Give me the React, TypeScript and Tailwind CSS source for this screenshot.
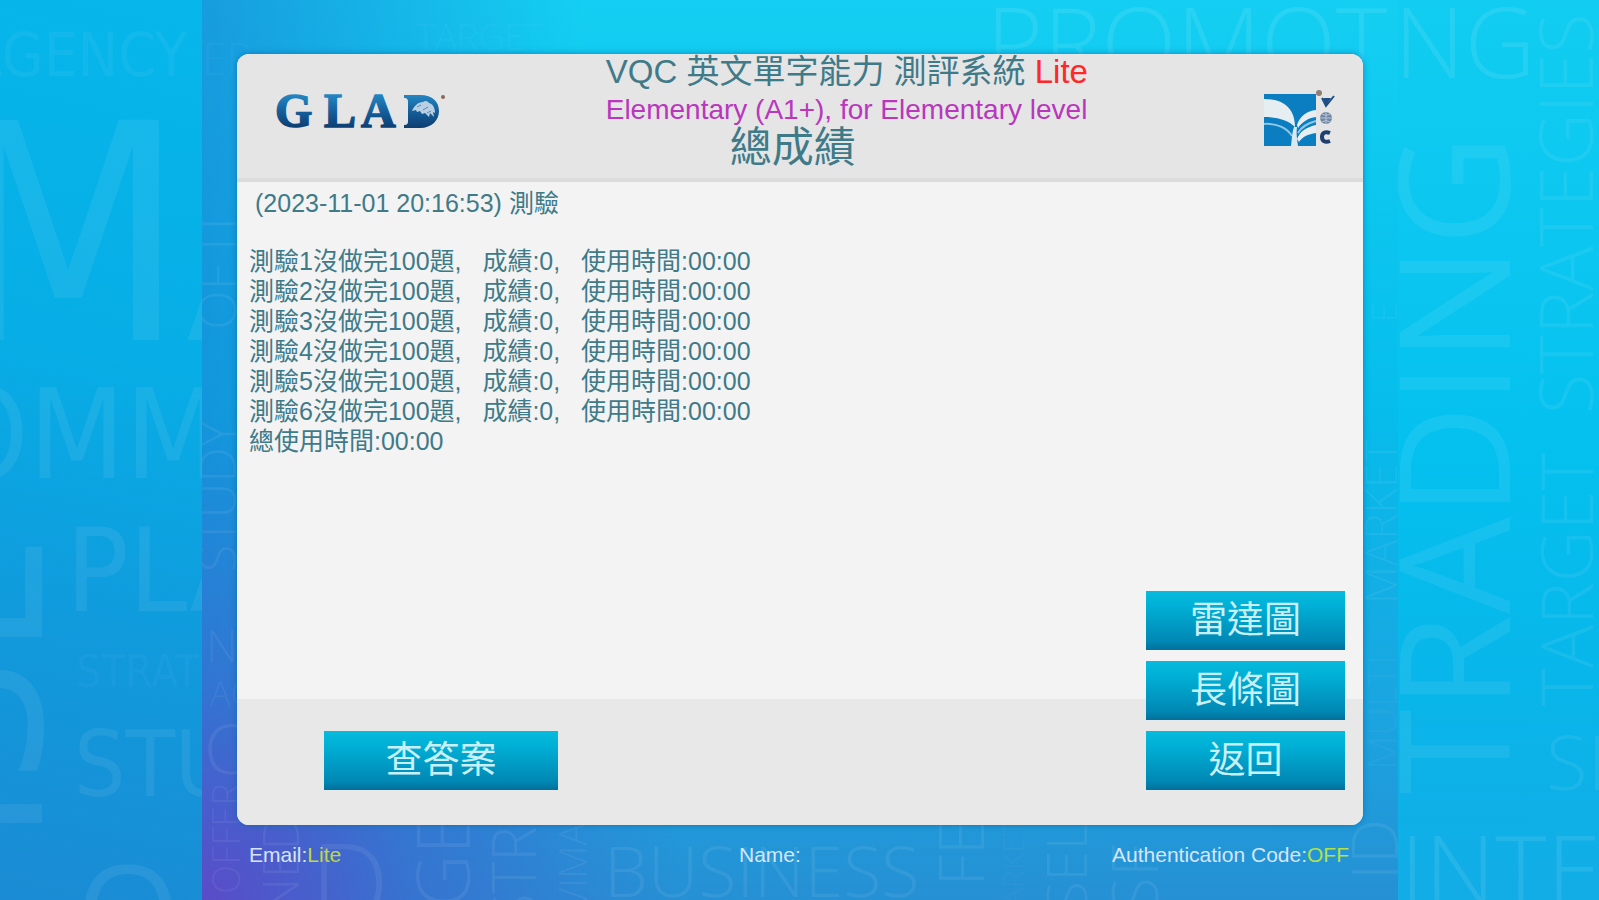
type Word = {
    text: string;
    x: number;
    y: number;
    size: number;
    vertical?: boolean;
    narrow?: boolean;
    bold?: boolean;
    opacity?: number;
};

const LEFT_WORDS: Word[] = [
    { text: 'AGENCY', x: -34, y: 76, size: 60, narrow: true, opacity: 0.05 },
    { text: 'MA', x: -49, y: 340, size: 302, narrow: true },
    { text: 'OMM', x: -59, y: 478, size: 124, narrow: true },
    { text: 'ISL', x: 42, y: 845, size: 225, vertical: true, bold: true },
    { text: 'PLAN', x: 66, y: 611, size: 116, narrow: true },
    { text: 'STRAT', x: 76, y: 687, size: 44, narrow: true, opacity: 0.05 },
    { text: 'STUDY', x: 74, y: 796, size: 90, narrow: true },
    { text: 'O', x: 76, y: 962, size: 134, bold: true },
];

const CENTER_WORDS: Word[] = [
    { text: 'PROMOT', x: 784, y: 78, size: 98, opacity: 0.09 },
    { text: 'ER', x: 0, y: 75, size: 44, opacity: 0.05 },
    { text: 'TARGET', x: 214, y: 50, size: 36, opacity: 0.05 },
    { text: 'STUDY', x: 34, y: 572, size: 50, vertical: true },
    { text: 'OF IT', x: 34, y: 330, size: 52, vertical: true },
    { text: 'NG', x: 4, y: 662, size: 44 },
    { text: 'AC', x: 8, y: 706, size: 34 },
    { text: 'C', x: 2, y: 774, size: 68 },
    { text: 'OFFER', x: 38, y: 894, size: 38, vertical: true },
    { text: 'NED', x: 97, y: 914, size: 50, vertical: true },
    { text: 'D', x: 108, y: 924, size: 112 },
    { text: 'GE', x: 268, y: 908, size: 74, vertical: true },
    { text: 'STR', x: 334, y: 926, size: 60, vertical: true },
    { text: 'VIMA', x: 385, y: 910, size: 38, vertical: true },
    { text: 'BUSINESS', x: 402, y: 897, size: 70 },
    { text: 'FE', x: 782, y: 886, size: 62, vertical: true },
    { text: 'MARKET', x: 822, y: 932, size: 30, vertical: true, opacity: 0.04 },
    { text: 'SEL', x: 885, y: 912, size: 56, vertical: true },
    { text: 'SF', x: 956, y: 912, size: 64, vertical: true },
    { text: 'MARKET', x: 1195, y: 604, size: 44, vertical: true },
    { text: 'MULTI', x: 1195, y: 770, size: 40, vertical: true, opacity: 0.05 },
    { text: 'E', x: 1195, y: 322, size: 34, vertical: true },
    { text: 'ID', x: 1196, y: 880, size: 64, vertical: true },
];

const RIGHT_WORDS: Word[] = [
    { text: 'NG', x: -4, y: 78, size: 98, opacity: 0.09 },
    { text: 'TRADING', x: 112, y: 794, size: 154, vertical: true, bold: true },
    { text: 'STRATEGIES', x: 195, y: 414, size: 74, vertical: true },
    { text: 'TARGET', x: 195, y: 706, size: 72, vertical: true },
    { text: 'SE', x: 148, y: 790, size: 76 },
    { text: 'INTER', x: 2, y: 906, size: 98, opacity: 0.09 },
];

const RESULTS = [1, 2, 3, 4, 5, 6].map((id) => ({ id, total: 100, score: 0, time: '00:00' }));

const BUTTON =
    'h-[59px] cursor-pointer bg-[linear-gradient(#08bade,#00b0d6_25%,#0088b4_85%,#00709c)] text-[37px] text-[#c8f0f8]';

const wordStyle = (word: Word) => {
    if (word.narrow) return "fill-white font-['DejaVu_Sans_Condensed','Open_Sans',sans-serif]";
    if (word.bold) return "fill-white font-['Open_Sans',sans-serif]";
    return "fill-white font-['Open_Sans',sans-serif] font-light";
};

const WordCloud = ({ words, width }: { words: Word[]; width: number }) => (
    <svg
        aria-hidden="true"
        viewBox={`0 0 ${width} 900`}
        preserveAspectRatio="xMidYMid slice"
        className="pointer-events-none absolute inset-0 h-full w-full select-none"
    >
        {words.map((word, i) => (
            <text
                key={i}
                transform={`translate(${word.x} ${word.y})${word.vertical ? ' rotate(-90)' : ''}`}
                fontSize={word.size}
                fillOpacity={word.opacity ?? 0.07}
                className={wordStyle(word)}
            >
                {word.text}
            </text>
        ))}
    </svg>
);

const GladLogo = () => (
    <svg role="img" aria-label="GLAD" viewBox="0 0 172 40" className="h-10 w-[172px]">
        <defs>
            <linearGradient id="glad" x1="0" y1="4" x2="0" y2="38" gradientUnits="userSpaceOnUse">
                <stop offset="0" stopColor="#2389c4" />
                <stop offset="0.5" stopColor="#155f9c" />
                <stop offset="1" stopColor="#0d3d70" />
            </linearGradient>
        </defs>
        <g
            fill="url(#glad)"
            stroke="url(#glad)"
            strokeWidth="1.5"
            fontSize="48"
            className="font-['Liberation_Serif',serif] font-bold"
        >
            <text x="0" y="37">G</text>
            <text x="49" y="37">L</text>
            <text x="86" y="37">A</text>
        </g>
        <path
            d="M129 5h16c13 0 19 7 19 16s-7 17-19 17h-16v-3c3 0 4-1 4-4V12c0-3-1-4-4-4z"
            fill="url(#glad)"
        />
        <path
            d="M137 21c2-5 6-9 11-9 2-2 5-1 6 1 4 1 6 5 6 10l-2-1 1 5-4-4-1 4-4-4-3 1-2-3-3 1-1-2z"
            fill="#b9cfe4"
        />
        <path d="M142 17l4-2m2 5l5-3m-1 6l4-2" stroke="#5b8ab8" />
        <circle cx="168" cy="7" r="2" fill="#8a6a58" />
    </svg>
);

const VqcLogo = () => (
    <svg role="img" aria-label="VQC" viewBox="0 0 72 56" className="h-14 w-[72px]">
        <rect y="4" width="52" height="52" fill="#0b7ec2" />
        <path d="M0 9c20 0 31 10 31 28C24 30 13 27 0 27z" fill="#e6eef2" />
        <path d="M33 35c3-9 10-14 19-15v7c-8 1-14 5-18 11z" fill="#e6eef2" />
        <path d="M33 49c3-8 10-12 19-14v8c-8 1-14 4-17 9z" fill="#e6eef2" />
        <path d="M0 34c13-1 23 4 28 12M34 43c4-7 10-10 18-12" fill="none" stroke="#8fc8e6" strokeWidth="2" />
        <path d="M27 56c1-8 1-14 3-19h3c-1 6 0 12 1 19z" fill="#d8e8f0" />
        <circle cx="55" cy="3" r="3" fill="#8d8074" />
        <path d="M59 8h8l-5 8z" fill="#1d4f86" />
        <path d="M58 8l4 8 8-10" fill="none" stroke="#1d4f86" strokeWidth="2" />
        <circle cx="62" cy="28" r="6" fill="#6f87a6" />
        <path d="M56 28h12M62 22v12M58 24q4 3 8 0M58 32q4-3 8 0" fill="none" stroke="#b9c6d6" />
        <path d="M66 43c-5-2-8 0-8 4s3 6 8 4" fill="none" stroke="#1f3f6e" strokeWidth="4" />
    </svg>
);

const App = () => {
    return (
        <div className="grid min-h-screen grid-cols-[202fr_1196fr_201fr] overflow-hidden font-['Liberation_Sans','Noto_Sans_CJK_TC',sans-serif]">
            <aside className="relative overflow-hidden bg-[linear-gradient(192deg,#06b7eb,#07ade6_40%,#109bdd_68%,#1a8bd4)]">
                <WordCloud words={LEFT_WORDS} width={202} />
            </aside>

            <main className="relative flex flex-col overflow-hidden bg-[radial-gradient(circle_at_0%_100%,#5a4cc8,#4a5ccc80_14%,#5a4cc800_32%),linear-gradient(to_right,#1a7ed2a0,#1a7ed200_32%),linear-gradient(to_top,#2690d4,#1ba4e0_20%,#06bdec_55%,#14cff2)] px-[35px] pt-[54px]">
                <WordCloud words={CENTER_WORDS} width={1196} />

                <div className="relative flex flex-1 flex-col overflow-hidden rounded-xl bg-[#f3f3f3] text-[#3f7a88] shadow-[0_0_6px_#0068a8b0]">
                    <header className="flex h-[128px] items-start border-b-4 border-[#dcdcdc] bg-[#e5e5e5] pr-[27px] pl-[38px]">
                        <div className="flex-4 pt-9">
                            <GladLogo />
                        </div>
                        <div className="whitespace-nowrap">
                            <h1 className="text-[33px] leading-9">
                                VQC 英文單字能力 測評系統 <span className="text-[#ff2828]">Lite</span>
                            </h1>
                            <p className="text-[28px] leading-10 text-[#b936bd]">
                                Elementary (A1+), for Elementary level
                            </p>
                            <h2 className="pl-[124px] text-[42px] leading-9">總成績</h2>
                        </div>
                        <div className="flex flex-3 justify-end pt-9">
                            <VqcLogo />
                        </div>
                    </header>

                    <section className="flex flex-1 flex-col justify-between bg-[linear-gradient(to_top,#e8e8e8_126px,#f3f3f3_126px)] pt-1.5">
                        <div className="px-3 text-[25px] leading-[30px] whitespace-pre">
                            <p className="mb-7 pl-1.5">(2023-11-01 20:16:53) 測驗</p>
                            {RESULTS.map((result) => (
                                <p key={result.id}>
                                    {`測驗${result.id}沒做完${result.total}題,   成績:${result.score},   使用時間:${result.time}`}
                                </p>
                            ))}
                            <p>總使用時間:00:00</p>
                        </div>

                        <div className="flex items-end justify-between pr-[18px] pb-[35px] pl-[87px]">
                            <button type="button" className={`${BUTTON} w-[234px]`}>查答案</button>
                            <div className="flex w-[199px] flex-col gap-[11px]">
                                <button type="button" className={BUTTON}>雷達圖</button>
                                <button type="button" className={BUTTON}>長條圖</button>
                                <button type="button" className={BUTTON}>返回</button>
                            </div>
                        </div>
                    </section>
                </div>

                <footer className="relative grid h-[75px] grid-cols-[49fr_25fr_36fr] pt-4 pr-3.5 pl-3 text-[21px] leading-7 whitespace-nowrap text-[#d6e6fa]">
                    <p>
                        Email:<span className="text-[#c0d83c]">Lite</span>
                    </p>
                    <p>Name:</p>
                    <p className="text-right">
                        Authentication Code:<span className="text-[#b4e048]">OFF</span>
                    </p>
                </footer>
            </main>

            <aside className="relative overflow-hidden bg-[linear-gradient(#12cdf1,#04c0ef_52%,#08b6ea_75%,#12ace6)]">
                <WordCloud words={RIGHT_WORDS} width={201} />
            </aside>
        </div>
    );
};

export default App;
